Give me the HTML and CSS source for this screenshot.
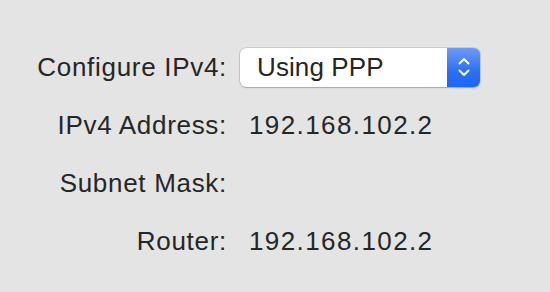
FILE: index.html
```html
<!DOCTYPE html>
<html lang="en">
<head>
    <meta charset="UTF-8">
    <title>TCP/IP</title>
    <link rel="stylesheet" href="styles.css">
</head>
<body>

    <div class="panel">
        <div class="form-grid">
            <label class="field-label">Configure IPv4:</label>
            <div class="popup">
                <span class="popup-value">Using PPP</span>
                <span class="popup-arrows">
                    <svg width="16" height="26" viewBox="0 0 16 26">
                        <path d="M3.5 9.5 L8 5 L12.5 9.5" fill="none" stroke="#fff" stroke-width="2" stroke-linecap="round" stroke-linejoin="round"/>
                        <path d="M3.5 16.5 L8 21 L12.5 16.5" fill="none" stroke="#fff" stroke-width="2" stroke-linecap="round" stroke-linejoin="round"/>
                    </svg>
                </span>
            </div>

            <span class="field-label">IPv4 Address:</span>
            <span class="field-value">192.168.102.2</span>

            <span class="field-label">Subnet Mask:</span>
            <span class="field-value"></span>

            <span class="field-label">Router:</span>
            <span class="field-value">192.168.102.2</span>
        </div>
    </div>

</body>
</html>
```

FILE: styles.css
```css
/* Global Styles */
* {
    margin: 0;
    padding: 0;
    box-sizing: border-box;
    font-family: 'Liberation Sans', Arial, sans-serif;
}

body {
    background: #e4e4e4;
    color: #262626;
    width: 550px;
    height: 292px;
    overflow: hidden;
}

/* PANEL */
.panel {
    padding: 48px 0 0 0;
}

.form-grid {
    display: grid;
    grid-template-columns: 227px 253px;
    grid-template-rows: 38px 38px 38px 38px;
    row-gap: 20px;
    column-gap: 13px;
    align-items: center;
    font-size: 26px;
    letter-spacing: 0.7px;
}

.field-label {
    text-align: right;
    white-space: nowrap;
}

.field-value {
    padding-left: 9px;
    white-space: nowrap;
    letter-spacing: 1.4px;
}

/* POPUP BUTTON */
.popup {
    display: flex;
    align-items: stretch;
    width: 240px;
    height: 39px;
    background: #ffffff;
    border-radius: 6px;
    box-shadow: 0 0 0 0.5px rgba(0, 0, 0, 0.22), 0 1px 1.5px rgba(0, 0, 0, 0.18);
    overflow: hidden;
}

.popup-value {
    flex: 1;
    display: flex;
    align-items: center;
    padding-left: 17px;
    letter-spacing: 0.1px;
}

.popup-arrows {
    width: 33px;
    display: flex;
    align-items: center;
    justify-content: center;
    background: linear-gradient(to bottom, #6c9cf9, #2c6ff6 60%, #1f66f4);
}
```
